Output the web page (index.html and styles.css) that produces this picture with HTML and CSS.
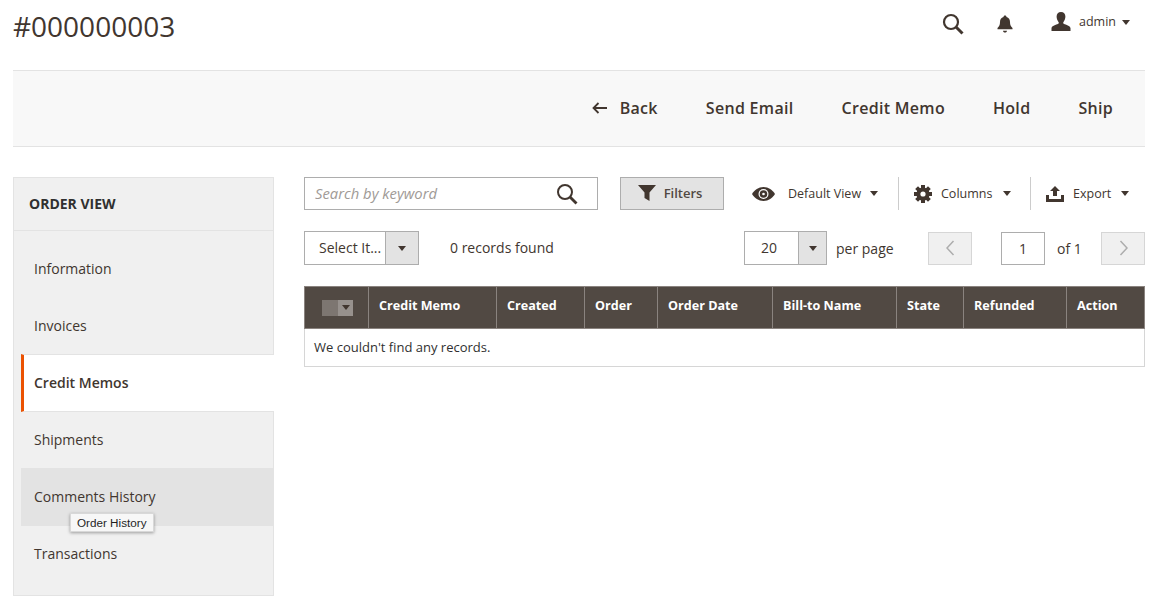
FILE: index.html
```html
<!DOCTYPE html>
<html lang="en">
<head>
  <meta charset="UTF-8">
  <meta name="viewport" content="width=device-width, initial-scale=1.0">
  <title>#000000003</title>
  <link rel="stylesheet" href="styles.css">
</head>
<body>

  <header class="page-header">
    <h1>#000000003</h1>
    <div class="header-tools">
      <svg class="tool-search" width="22" height="22" viewBox="0 0 22 22"><circle cx="9" cy="9" r="7" fill="none" stroke="#41362f" stroke-width="2.2"/><path d="M14 14l6.5 6.5" stroke="#41362f" stroke-width="3"/></svg>
      <svg class="tool-bell" width="16" height="18" viewBox="0 0 16 18"><path d="M8 0.5c1 0 1.5.7 1.5 1.5 2.3.6 3.5 2.5 3.5 5 0 3 .8 4.500 2.500 6v1.300H.5V13c1.700-1.500 2.500-3 2.500-6 0-2.500 1.200-4.400 3.500-5C6.500 1.200 7 .5 8 .5z" fill="#41362f"/><path d="M6 15.800h4c0 1-.9 1.800-2 1.800s-2-.8-2-1.800z" fill="#41362f"/></svg>
      <div class="tool-user">
        <svg width="20" height="20" viewBox="0 0 20 20"><path d="M10 0c2.800 0 4.400 1.900 4.400 4.600 0 2.100-.8 4.100-1.900 5.300-.5.600-.4 1.500.3 1.900 2.200 1.100 6.400 1.900 6.700 4.400V19H.5v-2.800c.3-2.500 4.500-3.300 6.700-4.400.7-.4.800-1.300.3-1.900C6.400 8.700 5.600 6.700 5.600 4.600 5.600 1.900 7.200 0 10 0z" fill="#41362f"/></svg>
        <span>admin</span>
        <i class="caret"></i>
      </div>
    </div>
  </header>

  <div class="actions-bar">
    <a class="action">
      <svg width="15" height="12" viewBox="0 0 15 12"><path d="M6.500 1L1.500 6l5 5M2 6h13" fill="none" stroke="#41362f" stroke-width="1.800"/></svg>
      Back
    </a>
    <a class="action">Send Email</a>
    <a class="action">Credit Memo</a>
    <a class="action">Hold</a>
    <a class="action">Ship</a>
  </div>

  <div class="main">
    <aside class="sidebar">
      <div class="sidebar-title">ORDER VIEW</div>
      <ul class="tabs">
        <li>Information</li>
        <li>Invoices</li>
        <li class="active">Credit Memos</li>
        <li>Shipments</li>
        <li class="hover">Comments History</li>
        <li>Transactions</li>
      </ul>
      <div class="tooltip">Order History</div>
    </aside>

    <section class="content">
      <div class="toolbar-top">
        <div class="search">
          <input type="text" placeholder="Search by keyword">
          <svg width="22" height="22" viewBox="0 0 22 22"><circle cx="9" cy="9" r="7" fill="none" stroke="#41362f" stroke-width="2"/><path d="M14 14l6.500 6.500" stroke="#41362f" stroke-width="2.800"/></svg>
        </div>
        <button class="filters">
          <svg width="18" height="16" viewBox="0 0 18 16"><path d="M0 0h18l-6.500 7.500V16L6.500 13V7.500z" fill="#41362f"/></svg>
          Filters
        </button>
        <div class="tool tool-view">
          <svg width="23" height="14" viewBox="0 0 23 14"><path d="M11.500 0C6.500 0 2.500 3 0 7c2.500 4 6.500 7 11.500 7S20.500 11 23 7C20.500 3 16.500 0 11.500 0z" fill="#41362f"/><circle cx="11.500" cy="7" r="5" fill="#fff"/><circle cx="11.500" cy="7" r="3.800" fill="#41362f"/><circle cx="11.500" cy="7" r="1.300" fill="#fff"/></svg>
          <span>Default View</span>
          <i class="caret"></i>
        </div>
        <div class="tool tool-columns">
          <svg width="18" height="18" viewBox="0 0 18 18"><path d="M9 0v18M0 9h18M2.600 2.600l12.800 12.800M15.400 2.600L2.600 15.400" stroke="#41362f" stroke-width="4"/><circle cx="9" cy="9" r="6.600" fill="#41362f"/><circle cx="9" cy="9" r="2.600" fill="#fff"/></svg>
          <span>Columns</span>
          <i class="caret"></i>
        </div>
        <div class="tool tool-export">
          <svg width="18" height="16" viewBox="0 0 18 16"><path d="M9 0l5 5h-3v5H7V5H4z" fill="#41362f"/><path d="M0 9h3v4h12V9h3v7H0z" fill="#41362f"/></svg>
          <span>Export</span>
          <i class="caret"></i>
        </div>
      </div>

      <div class="toolbar-bottom">
        <div class="select-box select-actions">
          <span>Select It...</span>
          <b><i class="caret"></i></b>
        </div>
        <div class="records">0 records found</div>
        <div class="select-box select-pagesize">
          <span>20</span>
          <b><i class="caret"></i></b>
        </div>
        <div class="per-page">per page</div>
        <button class="pager pager-prev"><svg width="9" height="16" viewBox="0 0 9 16"><path d="M7.500 1L1 8l6.500 7" fill="none" stroke="#adadad" stroke-width="1.500"/></svg></button>
        <div class="page-box">1</div>
        <div class="page-total">of 1</div>
        <button class="pager"><svg width="9" height="16" viewBox="0 0 9 16"><path d="M1.500 1L8 8l-6.500 7" fill="none" stroke="#adadad" stroke-width="1.500"/></svg></button>
      </div>

      <table class="grid">
        <thead>
          <tr>
            <th class="col-check"><span class="check"><em></em><b><i class="caret"></i></b></span></th>
            <th class="col-memo">Credit Memo</th>
            <th class="col-created">Created</th>
            <th class="col-order">Order</th>
            <th class="col-date">Order Date</th>
            <th class="col-bill">Bill-to Name</th>
            <th class="col-state">State</th>
            <th class="col-refund">Refunded</th>
            <th>Action</th>
          </tr>
        </thead>
        <tbody>
          <tr><td colspan="9">We couldn't find any records.</td></tr>
        </tbody>
      </table>
    </section>
  </div>

</body>
</html>
```
FILE: styles.css
```css
* {
  margin: 0;
  padding: 0;
  box-sizing: border-box;
}

body {
  font-family: "Open Sans", sans-serif;
  font-size: 14px;
  color: #41362f;
  background-color: #fff;
  padding: 0 14px 0 13px;
  overflow: hidden;
}

.caret {
  display: block;
  width: 0;
  height: 0;
  border-left: 4px solid transparent;
  border-right: 4px solid transparent;
  border-top: 5px solid #41362f;
}

/* Header */
.page-header {
  height: 70px;
  display: flex;
  justify-content: space-between;
}

h1 {
  font-size: 28px;
  font-weight: 400;
  line-height: 52px;
}

.header-tools {
  display: flex;
  align-items: flex-start;
  padding-right: 15px;
}

.tool-search {
  margin-top: 13px;
}

.tool-bell {
  margin: 15px 0 0 33px;
}

.tool-user {
  display: flex;
  align-items: center;
  margin: 12px 0 0 38px;
  font-size: 12.5px;
  height: 20px;
}

.tool-user span {
  margin: 0 6px 2px 8px;
}

/* Actions */
.actions-bar {
  height: 77px;
  display: flex;
  justify-content: flex-end;
  align-items: center;
  gap: 48px;
  padding: 0 32px 2px 0;
  background-color: #f8f8f8;
  border-top: 1px solid #e3e3e3;
  border-bottom: 1px solid #e3e3e3;
}

.action {
  display: flex;
  align-items: center;
  gap: 13px;
  font-size: 16px;
  font-weight: 600;
  letter-spacing: 0.3px;
}

/* Layout */
.main {
  display: flex;
  margin-top: 30px;
  gap: 30px;
}

.sidebar {
  position: relative;
  width: 261px;
  height: 419px;
  background-color: #f0f0f0;
  border: 1px solid #e3e3e3;
  flex-shrink: 0;
}

.sidebar-title {
  height: 53px;
  line-height: 51px;
  padding-left: 15px;
  font-weight: 700;
  color: #303030;
  border-bottom: 1px solid #e3e3e3;
}

.tabs {
  list-style: none;
  margin: 9px 0 0 7px;
}

.tabs li {
  height: 57px;
  line-height: 57px;
  padding-left: 13px;
}

.tabs .active {
  height: 58px;
  margin: 0 -1px -1px 0;
  padding-left: 10px;
  line-height: 55px;
  font-weight: 600;
  background-color: #fff;
  border-left: 3px solid #eb5202;
  border-top: 1px solid #e3e3e3;
  border-bottom: 1px solid #e3e3e3;
}

.tabs .hover {
  height: 58px;
  background-color: #e3e3e3;
}

.tabs li:last-child {
  line-height: 55px;
}

.tooltip {
  position: absolute;
  left: 56px;
  top: 335px;
  height: 19px;
  line-height: 18px;
  padding: 0 6px;
  font-family: "Liberation Sans", Arial, sans-serif;
  font-size: 11.7px;
  color: #1f1f1f;
  background-color: #f7f7f7;
  border: 1px solid #d8d8d8;
  box-shadow: 0 1px 3px rgba(0, 0, 0, 0.35);
}

/* Content */
.content {
  flex: 1;
  min-width: 0;
}

.toolbar-top {
  display: flex;
  align-items: center;
  height: 33px;
}

.search {
  width: 294px;
  height: 33px;
  display: flex;
  align-items: center;
  border: 1px solid #adadad;
  padding-right: 19px;
  background-color: #fff;
}

.search input {
  flex: 1;
  min-width: 0;
  border: 0;
  outline: 0;
  padding: 0 0 2px 10px;
  font-family: inherit;
  font-size: 14.8px;
  font-style: italic;
  background: transparent;
}

.search input::placeholder {
  color: #a09a96;
  opacity: 1;
}

.filters {
  width: 104px;
  height: 33px;
  margin-left: 22px;
  padding: 0 4px 2px 0;
  display: flex;
  align-items: center;
  justify-content: center;
  gap: 8px;
  font-family: inherit;
  font-size: 13px;
  font-weight: 600;
  color: #514943;
  background-color: #e3e3e3;
  border: 1px solid #adadad;
}

.tool {
  display: flex;
  align-items: center;
  height: 33px;
  font-size: 12.5px;
}

.tool-view {
  margin-left: 28px;
  width: 146px;
  gap: 13px;
}

.tool-view .caret {
  margin-left: -4px;
}

.tool-columns {
  width: 132px;
  padding-left: 15px;
  gap: 9px;
  border-left: 1px solid #ccc;
}

.tool-columns .caret {
  margin-left: 2px;
}

.tool-export {
  padding-left: 15px;
  gap: 9px;
  border-left: 1px solid #ccc;
}

.tool-export .caret {
  margin-left: 1px;
}

.toolbar-bottom {
  display: flex;
  align-items: center;
  margin-top: 21px;
  height: 34px;
}

.select-box {
  display: flex;
  height: 34px;
  border: 1px solid #adadad;
  background-color: #fff;
}

.select-box span {
  flex: 1;
  line-height: 31px;
}

.select-box b {
  width: 33px;
  display: flex;
  align-items: center;
  justify-content: center;
  background-color: #e3e3e3;
  border-left: 1px solid #adadad;
}

.select-actions {
  width: 115px;
}

.select-actions span {
  padding-left: 14px;
}

.records {
  margin: 0 0 2px 31px;
  width: 294px;
}

.select-pagesize {
  width: 83px;
}

.select-pagesize b {
  width: 28px;
}

.select-pagesize span {
  padding-left: 16px;
}

.per-page {
  margin-left: 9px;
  width: 92px;
}

.pager {
  width: 44px;
  height: 33px;
  display: flex;
  align-items: center;
  justify-content: center;
  background-color: #f0f0f0;
  border: 1px solid #d6d6d6;
}

.page-box {
  width: 44px;
  height: 33px;
  margin-left: 29px;
  line-height: 31px;
  text-align: center;
  border: 1px solid #adadad;
}

.page-total {
  margin-left: 12px;
  width: 44px;
}

/* Grid */
.grid {
  width: 841px;
  margin-top: 21px;
  table-layout: fixed;
  border-collapse: collapse;
}

.grid th {
  height: 42px;
  text-align: left;
  padding: 0 0 4px 10px;
  font-size: 12.6px;
  font-weight: 700;
  color: #fff;
  background-color: #514943;
  border: 1px solid #8a837f;
}

.grid td {
  height: 38px;
  padding: 0 0 2px 9px;
  font-size: 13px;
  color: #303030;
  border: 1px solid #d6d6d6;
  border-top: 0;
}

.col-check { width: 64px; }
.col-memo { width: 128px; }
.col-created { width: 88px; }
.col-order { width: 73px; }
.col-date { width: 115px; }
.col-bill { width: 124px; }
.col-state { width: 67px; }
.col-refund { width: 103px; }

.grid th.col-check {
  padding: 0 0 0 17px;
}

.check {
  display: flex;
  width: 31px;
  height: 16px;
}

.check em {
  flex: 1;
  background-color: #7d7671;
}

.check b {
  width: 15px;
  display: flex;
  align-items: center;
  justify-content: center;
  background-color: #97918d;
}
```
